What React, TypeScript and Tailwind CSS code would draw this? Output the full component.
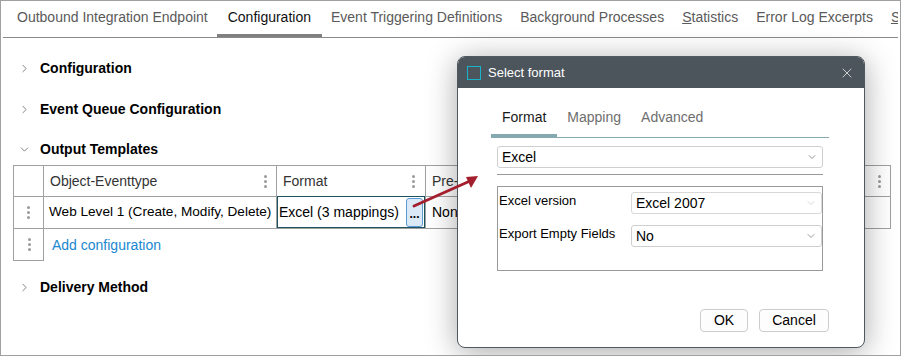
import { ChevronDown, ChevronRight, X } from "lucide-react";

function Kebab() {
  return (
    <span className="flex flex-col gap-[2px]">
      <span className="w-[3px] h-[3px] rounded-full bg-[#9a9a9a]" />
      <span className="w-[3px] h-[3px] rounded-full bg-[#9a9a9a]" />
      <span className="w-[3px] h-[3px] rounded-full bg-[#9a9a9a]" />
    </span>
  );
}

function Section({ title, open, className }: { title: string; open?: boolean; className?: string }) {
  return (
    <div className={`flex items-center h-[20px] pl-[16px] ${className ?? ""}`}>
      <span className="w-[14px] flex justify-center text-[#707070]">
        {open ? <ChevronDown size={13} strokeWidth={1.6} /> : <ChevronRight size={13} strokeWidth={1.6} />}
      </span>
      <span className="ml-[9px] text-[14px] font-bold text-black">{title}</span>
    </div>
  );
}

const tabs = [
  "Outbound Integration Endpoint",
  "Configuration",
  "Event Triggering Definitions",
  "Background Processes",
  "Statistics",
  "Error Log Excerpts",
  "Status",
];

export default function App() {
  return (
    <div className="relative w-[901px] h-[356px] overflow-hidden bg-white border border-[#a0a0a0] text-[14px] text-black font-['Liberation_Sans',Arial,sans-serif]">
      {/* Top tabs */}
      <div className="flex pl-[5px] mx-[2px] border-b border-[#8a8a8a] whitespace-nowrap overflow-hidden">
        {tabs.map((t) => (
          <div
            key={t}
            className={`h-[36px] px-[9px] flex items-center border-b-[3px] ${
              t === "Configuration" ? "border-[#808080] text-[#111] px-[11px]" : "border-transparent text-[#5a5a5a]"
            }`}
          >
            {t === "Statistics" || t === "Status" ? (
              <span>
                <span className="underline">S</span>
                {t.slice(1)}
              </span>
            ) : (
              t
            )}
          </div>
        ))}
      </div>

      <Section title="Configuration" className="mt-[20px]" />
      <Section title="Event Queue Configuration" className="mt-[21px]" />
      <Section title="Output Templates" open className="mt-[20px]" />

      {/* Table */}
      <div className="ml-[12px] mt-[6px] w-[878px]">
        <div className="flex h-[32px] border border-[#a0a0a0] text-[#333]">
          <div className="w-[30px] border-r border-[#a0a0a0]" />
          <div className="w-[233px] border-r border-[#a0a0a0] flex items-center justify-between pl-[6px] pr-[9px]">
            <span>Object-Eventtype</span>
            <Kebab />
          </div>
          <div className="w-[149px] border-r border-[#a0a0a0] flex items-center justify-between pl-[6px] pr-[10px]">
            <span>Format</span>
            <Kebab />
          </div>
          <div className="flex-1 flex items-center justify-between pl-[6px] pr-[9px]">
            <span>Pre-processing</span>
            <Kebab />
          </div>
        </div>
        <div className="flex h-[32px] border-x border-b border-[#a0a0a0]">
          <div className="w-[30px] border-r border-[#a0a0a0] flex items-center justify-center">
            <Kebab />
          </div>
          <div className="w-[233px] border-r border-[#a0a0a0] flex items-center pl-[5px] whitespace-nowrap text-[13.6px]">
            Web Level 1 (Create, Modify, Delete)
          </div>
          <div className="w-[149px] border-r border-[#a0a0a0]">
            <div className="border border-[#1d535e] flex items-center justify-between pl-[1px] pr-[1px] -mt-px h-[32px]">
              <span className="whitespace-nowrap">Excel (3 mappings)</span>
              <span className="w-[17px] h-[29px] rounded-[3px] border border-[#5b9bd5] bg-[#dbe8f6] flex items-end justify-center pb-[6px] text-[12px] font-bold leading-none">
                ...
              </span>
            </div>
          </div>
          <div className="flex-1 flex items-center pl-[6px]">None</div>
        </div>
        <div className="flex h-[32px]">
          <div className="w-[31px] border-l border-r border-b border-[#a0a0a0] flex items-center justify-center pl-[1px]">
            <Kebab />
          </div>
          <div className="flex items-center pl-[8px] text-[#1a87d0]">Add configuration</div>
        </div>
      </div>

      <Section title="Delivery Method" className="mt-[16px]" />

      {/* Dialog */}
      <div className="absolute left-[456px] top-[55px] w-[408px] h-[292px] flex flex-col bg-white border border-[#4f585e] rounded-[8px] shadow-[0_4px_30px_rgba(0,0,0,0.35)]">
        <div className="h-[31px] bg-[#4c555b] rounded-t-[7px] flex items-center pl-[9px] pr-[9px]">
          <span className="w-[14px] h-[14px] border-[1.5px] border-[#19b3cb]" />
          <span className="ml-[7px] text-[13px] text-white">Select format</span>
          <X size={16} strokeWidth={1.3} className="ml-auto text-[#e2e2e2]" />
        </div>
        <div className="flex-1 flex flex-col pl-[33px] pr-[35px] pb-[15px]">
          <div className="flex mt-[13px] border-b border-[#86a8b0]">
            <div className="h-[36px] px-[11px] flex items-center border-b-[3px] border-[#86a8b0] text-[#1a1a1a]">Format</div>
            <div className="h-[36px] px-[10px] flex items-center border-b-[3px] border-transparent text-[#6e6e6e]">Mapping</div>
            <div className="h-[36px] px-[10px] flex items-center border-b-[3px] border-transparent text-[#6e6e6e]">Advanced</div>
          </div>
          <div className="mx-[6px] mt-[8px] h-[22px] border border-[#cfcfcf] rounded-[3px] flex items-center justify-between pl-[4px] pr-[4px]">
            <span>Excel</span>
            <ChevronDown size={12} strokeWidth={1.3} className="text-[#666]" />
          </div>
          <div className="mx-[6px] mt-[6px] h-px bg-[#9a9a9a]" />
          <div className="mx-[6px] mt-[11px] h-[85px] border border-[#9a9a9a] pl-[1px] pt-[5px]">
            <div className="flex items-start h-[22px]">
              <span className="w-[132px] text-[13px] leading-[18px]">Excel version</span>
              <div className="flex-1 h-[22px] border border-[#d8d8d8] rounded-[3px] flex items-center justify-between pl-[4px] pr-[4px]">
                <span>Excel 2007</span>
                <ChevronDown size={12} strokeWidth={1.3} className="text-[#c4c4c4]" />
              </div>
            </div>
            <div className="flex items-start h-[22px] mt-[11px]">
              <span className="w-[132px] text-[13px] leading-[18px] whitespace-nowrap">Export Empty Fields</span>
              <div className="flex-1 h-[22px] border border-[#cfcfcf] rounded-[3px] flex items-center justify-between pl-[4px] pr-[4px]">
                <span>No</span>
                <ChevronDown size={12} strokeWidth={1.3} className="text-[#666]" />
              </div>
            </div>
          </div>
          <div className="mt-auto flex justify-end gap-[11px]">
            <button className="w-[48px] h-[23px] border border-[#cdcdcd] rounded-[4px] bg-[#fdfdfd] text-[14px]">OK</button>
            <button className="w-[70px] h-[23px] border border-[#cdcdcd] rounded-[4px] bg-[#fdfdfd] text-[14px]">Cancel</button>
          </div>
        </div>
      </div>

      {/* Annotation arrow */}
      <svg className="absolute left-0 top-0 pointer-events-none" width="901" height="356">
        <line x1="413" y1="205" x2="469" y2="180" stroke="#a31f2e" strokeWidth="3" strokeLinecap="round" />
        <polygon points="477,175 465,176 470,187" fill="#a31f2e" />
      </svg>
    </div>
  );
}
